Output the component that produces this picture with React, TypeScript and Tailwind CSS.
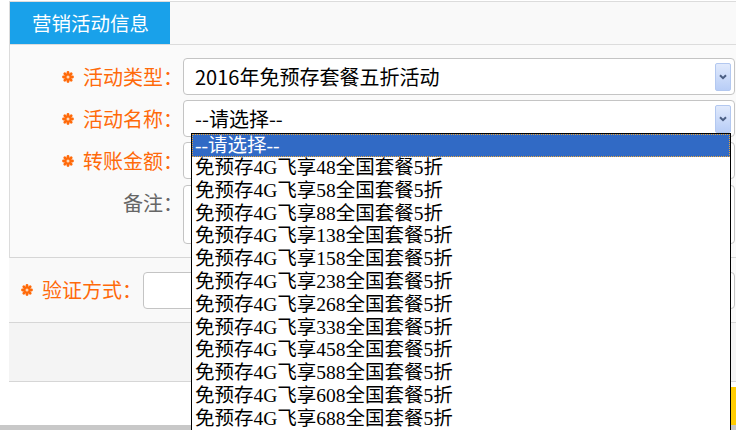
import React from "react";

const sans = { fontFamily: '"Noto Sans CJK SC", "Noto Sans", sans-serif' };
const serif = { fontFamily: '"Liberation Serif", "Noto Sans CJK SC", serif' };

function Star() {
  return (
    <svg width="12" height="12" viewBox="0 0 12 12" className="shrink-0">
      <g stroke="#ff6a0a" strokeWidth="2.8" strokeLinecap="round">
        <line x1="6" y1="1.5" x2="6" y2="10.5" />
        <line x1="1.5" y1="6" x2="10.5" y2="6" />
        <line x1="2.8" y1="2.8" x2="9.2" y2="9.2" />
        <line x1="9.2" y1="2.8" x2="2.8" y2="9.2" />
      </g>
      <circle cx="6" cy="6" r="1.5" fill="#ffd9b8" />
    </svg>
  );
}

function Arrow() {
  return (
    <div className="flex h-[28px] w-[16px] shrink-0 items-center justify-center rounded-[2px] border border-[#b3c8f0] bg-gradient-to-b from-[#e1eafc] to-[#b8cdf6]">
      <svg width="8" height="6" viewBox="0 0 8 6">
        <path d="M1 1.2 L4 4.2 L7 1.2" fill="none" stroke="#4b5e82" strokeWidth="2" />
      </svg>
    </div>
  );
}

function Label({ text, star = true, gray = false }: { text: string; star?: boolean; gray?: boolean }) {
  return (
    <div className="flex w-[173px] shrink-0 items-center justify-end gap-[9px]">
      {star && <Star />}
      <span className={`text-[20px] leading-[36px] ${gray ? "text-[#666]" : "text-[#ff6a0a]"}`}>{text}</span>
    </div>
  );
}

const items = [
  "免预存4G飞享48全国套餐5折",
  "免预存4G飞享58全国套餐5折",
  "免预存4G飞享88全国套餐5折",
  "免预存4G飞享138全国套餐5折",
  "免预存4G飞享158全国套餐5折",
  "免预存4G飞享238全国套餐5折",
  "免预存4G飞享268全国套餐5折",
  "免预存4G飞享338全国套餐5折",
  "免预存4G飞享458全国套餐5折",
  "免预存4G飞享588全国套餐5折",
  "免预存4G飞享608全国套餐5折",
  "免预存4G飞享688全国套餐5折",
];

export default function App() {
  return (
    <div className="relative h-[430px] w-[736px] overflow-hidden bg-white" style={sans}>
      <div className="pl-[9px] pt-px">
        {/* Section 1 */}
        <div className="border-l border-t border-[#dcdcdc]">
          <div className="flex h-[43px] border-b border-[#dcdcdc] bg-[#f9f9f9]">
            <div className="flex h-full w-[160px] items-center bg-[#19a1ea] pl-[22px] text-[19.5px] text-white">
              营销活动信息
            </div>
          </div>
          <div className="flex flex-col gap-[5px] border-b border-[#d6d6d6] bg-[#fafafa] pb-[13px] pt-[13px]">
            <div className="flex">
              <Label text="活动类型：" />
              <div className="mr-px flex h-[37px] flex-1 items-center rounded-[4px] border border-[#c4c4c4] bg-white pl-[11px] pr-[3px]">
                <span className="flex-1 text-[20px] text-black">2016年免预存套餐五折活动</span>
                <Arrow />
              </div>
            </div>
            <div className="flex">
              <Label text="活动名称：" />
              <div className="mr-px flex h-[37px] flex-1 items-center rounded-[4px] border border-[#c4c4c4] bg-white pl-[11px] pr-[3px]">
                <span className="flex-1 text-[20px] text-black">--请选择--</span>
                <Arrow />
              </div>
            </div>
            <div className="flex">
              <Label text="转账金额：" />
              <div className="mr-px h-[37px] flex-1 rounded-[4px] border border-[#c4c4c4] bg-white" />
            </div>
            <div className="mt-px flex items-start">
              <Label text="备注：" star={false} gray />
              <div className="mr-px h-[59px] flex-1 rounded-[4px] border border-[#c4c4c4] bg-white" />
            </div>
          </div>
        </div>

        {/* Section 2 */}
        <div className="flex h-[65px] items-center border-b border-[#d6d6d6] bg-[#f9f9f9] pl-[12px]">
          <Star />
          <span className="ml-[9px] w-[101px] text-[20px] text-[#ff6a0a]">验证方式：</span>
          <div className="mr-px h-[37px] flex-1 rounded-[4px] border border-[#c4c4c4] bg-white" />
        </div>

        {/* Section 3 */}
        <div className="h-[59px] border-b border-[#d6d6d6] bg-[#f4f4f4]" />

        {/* Button row */}
        <div className="flex h-[43px] items-start justify-end overflow-hidden pt-[5px]">
          <div className="mr-[-60px] h-[38px] w-[120px] shrink-0 rounded-[3px] bg-[#ffcc00]" />
        </div>
      </div>
      <div className="h-[6px] bg-[#c8c8c8]" />

      {/* Open dropdown list */}
      <div className="absolute left-[191px] top-[133px] w-[540px] border border-black bg-white text-black" style={serif}>
        <div className="box-border h-[23px] border border-dotted border-[#e6a43a] bg-[#316ac5] pl-[2px] text-[19.5px] leading-[21px] text-white">
          --请选择--
        </div>
        {items.map((t) => (
          <div key={t} className="h-[22.8px] whitespace-nowrap pl-[3px] text-[19.5px] leading-[22.8px]">
            {t}
          </div>
        ))}
      </div>
    </div>
  );
}
